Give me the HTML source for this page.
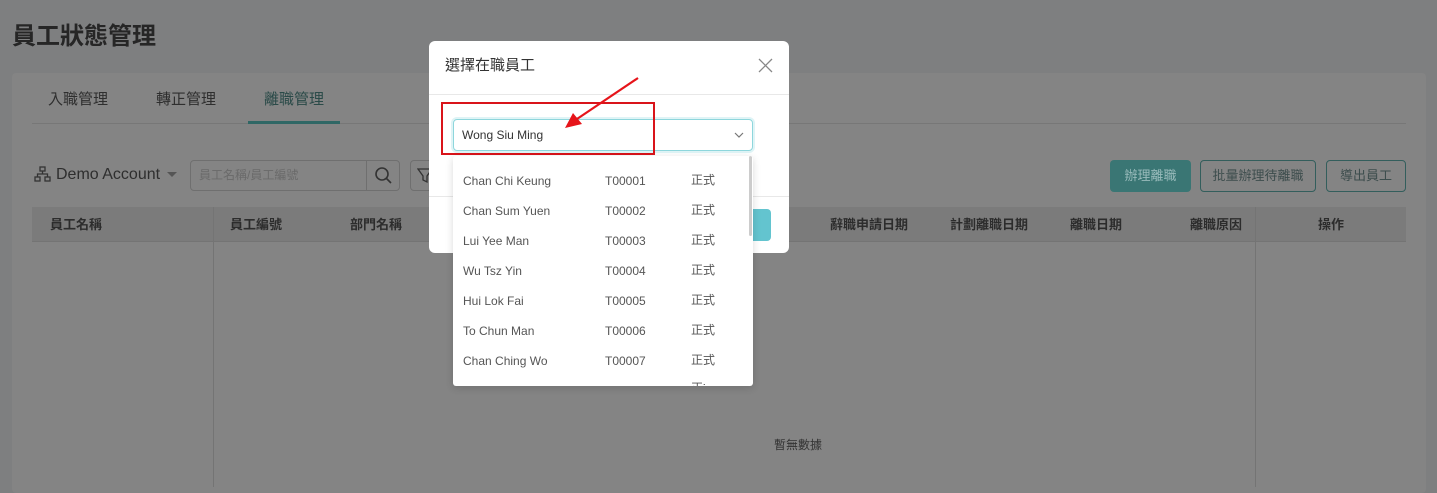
<!DOCTYPE html>
<html><head><meta charset="utf-8"><style>
*{margin:0;padding:0;box-sizing:border-box}
body{width:1437px;height:486px;overflow:hidden;background:#7e7f80;font-family:"Liberation Sans","Noto Sans CJK TC",sans-serif;position:relative;color:#2b2b2b}
.a{position:absolute;white-space:nowrap;line-height:1.2}
.card{position:absolute;left:12px;top:73px;width:1414px;height:420px;background:#848484;border-radius:4px}
.dim{color:#2e2e2e}
.row{position:absolute;left:463px;font-size:12px;color:#555;line-height:14px;height:14px}
</style></head><body>
<div class="a" style="left:12px;top:23px;font-size:24px;font-weight:bold;color:#262626">員工狀態管理</div>
<div class="card"></div>
<div class="a dim" style="left:48px;top:91px;font-size:15px">入職管理</div>
<div class="a dim" style="left:156px;top:91px;font-size:15px">轉正管理</div>
<div class="a" style="left:264px;top:91px;font-size:15px;color:#2a4a48">離職管理</div>
<div class="a" style="left:32px;top:123px;width:1374px;height:1px;background:#777"></div>
<div class="a" style="left:248px;top:121px;width:92px;height:3px;background:#2f6765"></div>
<svg class="a" style="left:34px;top:166px" width="17" height="17" viewBox="0 0 17 17" fill="none" stroke="#333" stroke-width="1.3"><rect x="6" y="1" width="5" height="4"/><rect x="1" y="11" width="5" height="4"/><rect x="11" y="11" width="5" height="4"/><path d="M8.5 5v3M3.5 11V8h10v3"/></svg>
<div class="a dim" style="left:56px;top:165px;font-size:16px">Demo Account</div>
<div class="a" style="left:167px;top:172px;border:5px solid transparent;border-top-color:#555;border-bottom:0"></div>
<div class="a" style="left:190px;top:160px;width:210px;height:31px;border:1px solid #6f6f6f;border-radius:4px"></div>
<div class="a" style="left:366px;top:160px;width:1px;height:31px;background:#6f6f6f"></div>
<div class="a" style="left:199px;top:168px;font-size:12px;color:#6a6a6a">員工名稱/員工編號</div>
<svg class="a" style="left:374px;top:166px" width="19" height="19" viewBox="0 0 19 19" fill="none" stroke="#333" stroke-width="1.6"><circle cx="8" cy="8" r="6"/><path d="M12.5 12.5L17 17"/></svg>
<div class="a" style="left:410px;top:160px;width:30px;height:31px;border:1px solid #6f6f6f;border-radius:4px"></div>
<svg class="a" style="left:417px;top:168px" width="16" height="16" viewBox="0 0 16 16" fill="none" stroke="#333" stroke-width="1.3"><path d="M1 1h14l-5 7v6l-4-2V8z"/></svg>
<div class="a" style="left:1110px;top:160px;width:81px;height:32px;background:#3a7674;border-radius:4px;color:#9bb;font-size:13px;text-align:center;line-height:32px">辦理離職</div>
<div class="a" style="left:1200px;top:160px;width:116px;height:32px;border:1px solid #335e5c;border-radius:4px;color:#3d4d4d;font-size:13px;text-align:center;line-height:30px">批量辦理待離職</div>
<div class="a" style="left:1326px;top:160px;width:80px;height:32px;border:1px solid #335e5c;border-radius:4px;color:#3d4d4d;font-size:13px;text-align:center;line-height:30px">導出員工</div>
<div class="a" style="left:32px;top:207px;width:1374px;height:35px;background:#7b7b7b;border-bottom:1px solid #747474"></div>
<div class="a" style="left:213px;top:207px;width:1px;height:280px;background:#747474"></div>
<div class="a" style="left:1255px;top:207px;width:1px;height:280px;background:#747474"></div>
<div class="a" style="left:50px;top:217px;font-size:13px;font-weight:bold;color:#2c2c2c">員工名稱</div>
<div class="a" style="left:230px;top:217px;font-size:13px;font-weight:bold;color:#2c2c2c">員工編號</div>
<div class="a" style="left:350px;top:217px;font-size:13px;font-weight:bold;color:#2c2c2c">部門名稱</div>
<div class="a" style="left:830px;top:217px;font-size:13px;font-weight:bold;color:#2c2c2c">辭職申請日期</div>
<div class="a" style="left:950px;top:217px;font-size:13px;font-weight:bold;color:#2c2c2c">計劃離職日期</div>
<div class="a" style="left:1070px;top:217px;font-size:13px;font-weight:bold;color:#2c2c2c">離職日期</div>
<div class="a" style="left:1190px;top:217px;font-size:13px;font-weight:bold;color:#2c2c2c">離職原因</div>
<div class="a" style="left:1318px;top:217px;font-size:13px;font-weight:bold;color:#2c2c2c">操作</div>
<div class="a" style="left:774px;top:438px;font-size:12px;color:#333">暫無數據</div>

<div class="a" style="left:429px;top:41px;width:360px;height:212px;background:#fff;border-radius:6px"></div>
<div class="a" style="left:445px;top:57px;font-size:15px;color:#333">選擇在職員工</div>
<svg class="a" style="left:758px;top:58px" width="15" height="15" viewBox="0 0 15 15" stroke="#888" stroke-width="1.3"><path d="M1 1l13 13M14 1L1 14"/></svg>
<div class="a" style="left:429px;top:94px;width:360px;height:1px;background:#e8e8e8"></div>
<div class="a" style="left:429px;top:196px;width:360px;height:1px;background:#e8e8e8"></div>
<div class="a" style="left:720px;top:209px;width:51px;height:32px;background:#63c4cf;border-radius:4px"></div>
<div class="a" style="left:453px;top:119px;width:300px;height:32px;border:1px solid #8ed6dc;border-radius:4px;box-shadow:0 0 0 2px #dff4f6"></div>
<div class="a" style="left:462px;top:128px;font-size:12px;color:#333">Wong Siu Ming</div>
<svg class="a" style="left:734px;top:131px" width="10" height="8" viewBox="0 0 10 8" fill="none" stroke="#777" stroke-width="1.2"><path d="M1 2l4 4 4-4"/></svg>
<div class="a" style="left:441px;top:102px;width:214px;height:53px;border:2px solid #d9141a"></div>
<svg class="a" style="left:560px;top:75px" width="82" height="60" viewBox="0 0 82 60"><path d="M78 3L14 46" stroke="#e6141a" stroke-width="2.2"/><path d="M5 53L13 38L22 49Z" fill="#e6141a"/></svg>
<div class="a" style="left:453px;top:156px;width:300px;height:230px;background:#fff;border-radius:3px;box-shadow:0 2px 8px rgba(0,0,0,.15);overflow:hidden">
<div class="a" style="right:1px;top:0;width:3px;height:80px;background:#ccc;border-radius:2px"></div>
<div class="a" style="left:238px;top:225px;width:14px;height:5px;overflow:hidden;font-size:12px;color:#555;line-height:14px">正式</div>
</div>
<div class="row" style="top:174px">Chan Chi Keung</div><div class="row" style="left:605px;top:174px">T00001</div><div class="row" style="left:691px;top:173px">正式</div>
<div class="row" style="top:204px">Chan Sum Yuen</div><div class="row" style="left:605px;top:204px">T00002</div><div class="row" style="left:691px;top:203px">正式</div>
<div class="row" style="top:234px">Lui Yee Man</div><div class="row" style="left:605px;top:234px">T00003</div><div class="row" style="left:691px;top:233px">正式</div>
<div class="row" style="top:264px">Wu Tsz Yin</div><div class="row" style="left:605px;top:264px">T00004</div><div class="row" style="left:691px;top:263px">正式</div>
<div class="row" style="top:294px">Hui Lok Fai</div><div class="row" style="left:605px;top:294px">T00005</div><div class="row" style="left:691px;top:293px">正式</div>
<div class="row" style="top:324px">To Chun Man</div><div class="row" style="left:605px;top:324px">T00006</div><div class="row" style="left:691px;top:323px">正式</div>
<div class="row" style="top:354px">Chan Ching Wo</div><div class="row" style="left:605px;top:354px">T00007</div><div class="row" style="left:691px;top:353px">正式</div>
</body></html>
